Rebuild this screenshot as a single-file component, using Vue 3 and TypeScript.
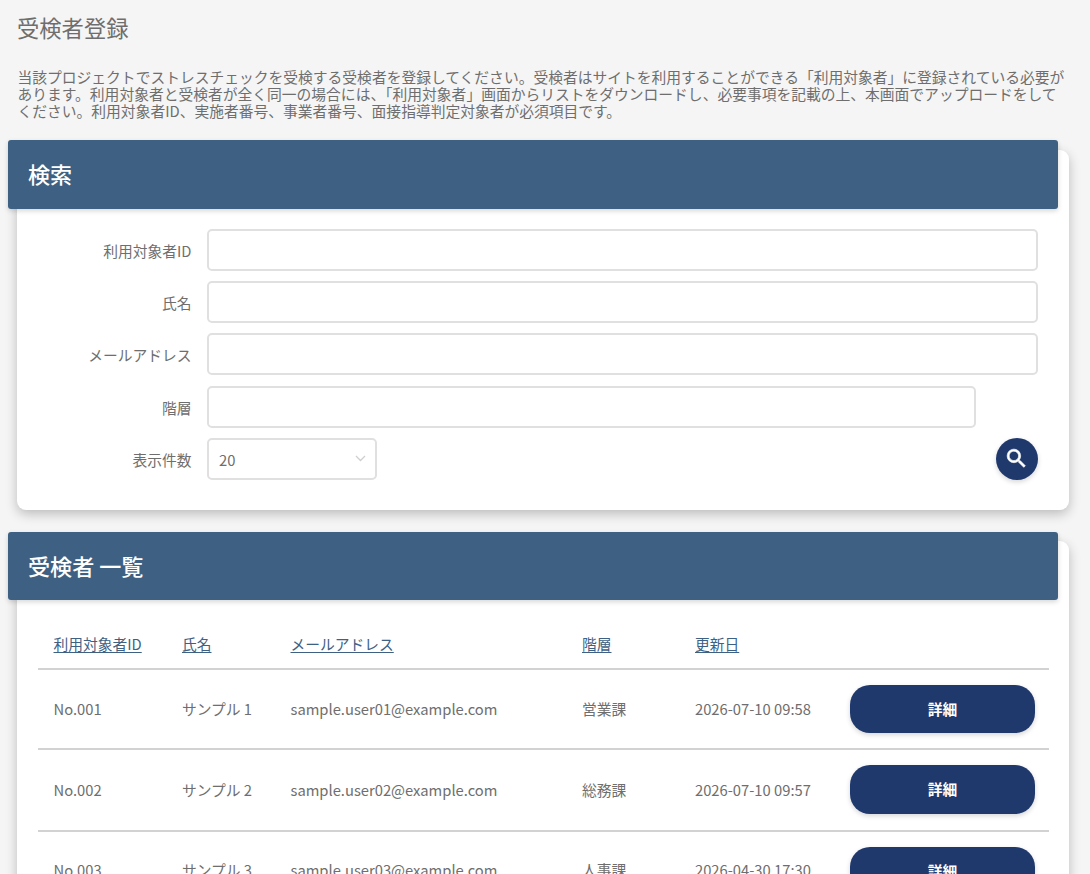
<script setup lang="ts">
interface Field {
  id: string
  label: string
  short?: boolean
}

interface Row {
  no: string
  name: string
  mail: string
  dept: string
  updated: string
}

const intro: string[] = [
  '当該プロジェクトでストレスチェックを受検する受検者を登録してください。受検者はサイトを利用することができる「利用対象者」に登録されている必要が',
  'あります。利用対象者と受検者が全く同一の場合には、「利用対象者」画面からリストをダウンロードし、必要事項を記載の上、本画面でアップロードをして',
  'ください。利用対象者ID、実施者番号、事業者番号、面接指導判定対象者が必須項目です。',
]

const fields: Field[] = [
  { id: 'user-id', label: '利用対象者ID' },
  { id: 'name', label: '氏名' },
  { id: 'mail', label: 'メールアドレス' },
  { id: 'dept', label: '階層', short: true },
]

const columns: string[] = ['利用対象者ID', '氏名', 'メールアドレス', '階層', '更新日']

const rows: Row[] = [
  { no: 'No.001', name: 'サンプル 1', mail: 'sample.user01@example.com', dept: '営業課', updated: '2026-07-10 09:58' },
  { no: 'No.002', name: 'サンプル 2', mail: 'sample.user02@example.com', dept: '総務課', updated: '2026-07-10 09:57' },
  { no: 'No.003', name: 'サンプル 3', mail: 'sample.user03@example.com', dept: '人事課', updated: '2026-04-30 17:30' },
]
</script>

<template>
  <main class="page" lang="ja">
    <h1 class="title">受検者登録</h1>
    <p class="intro">
      <span v-for="line in intro" :key="line" class="intro-line">{{ line }}</span>
    </p>

    <section class="card search-card">
      <h2 class="card-head">検索</h2>
      <form class="form" @submit.prevent>
        <div v-for="f in fields" :key="f.id" class="field">
          <label class="label" :for="f.id">{{ f.label }}</label>
          <input :id="f.id" class="input" :class="{ short: f.short }" type="text" />
        </div>
        <div class="field">
          <span class="label">表示件数</span>
          <div class="select">
            <span>20</span>
            <svg class="chevron" width="11" height="7" viewBox="0 0 11 7">
              <path d="M1 1l4.500 4.500L10 1" fill="none" stroke="#cfcfcf" stroke-width="1.300" />
            </svg>
          </div>
          <button class="search-btn" type="submit" aria-label="検索">
            <svg width="25" height="25" viewBox="0 0 24 24">
              <path
                fill="#fff"
                stroke="#fff"
                stroke-width="0.600"
                d="M15.500 14h-.79l-.28-.27A6.471 6.471 0 0 0 16 9.500 6.500 6.500 0 1 0 9.500 16c1.610 0 3.090-.59 4.230-1.570l.27.28v.79l5 4.990L20.490 19l-4.990-5zm-6 0C7.010 14 5 11.990 5 9.500S7.010 5 9.500 5 14 7.010 14 9.500 11.990 14 9.500 14z"
              />
            </svg>
          </button>
        </div>
      </form>
    </section>

    <section class="card list-card">
      <h2 class="card-head">受検者 一覧</h2>
      <div class="table">
        <div class="row head-row">
          <span v-for="c in columns" :key="c"><a class="sort">{{ c }}</a></span>
        </div>
        <div v-for="r in rows" :key="r.no" class="row data-row">
          <span>{{ r.no }}</span>
          <span>{{ r.name }}</span>
          <span>{{ r.mail }}</span>
          <span>{{ r.dept }}</span>
          <span>{{ r.updated }}</span>
          <button class="detail" type="button">詳細</button>
        </div>
      </div>
    </section>
  </main>
</template>

<style>
html,
body {
  margin: 0;
  background: #f5f5f5;
  overflow: hidden;
}
</style>

<style scoped>
.page {
  box-sizing: border-box;
  width: 1090px;
  height: 874px;
  overflow: hidden;
  background: #f5f5f5;
  color: #6e6e6e;
  font-family: 'Noto Sans CJK JP', sans-serif;
  font-size: 14.750px;
}
.title {
  margin: 0;
  padding: 11px 0 0 17px;
  font-size: 22.300px;
  font-weight: 400;
  line-height: 32px;
}
.intro {
  margin: 25px 0 0 17.500px;
  font-size: 14.770px;
  line-height: 17px;
}
.intro-line {
  display: block;
  white-space: nowrap;
}
.card {
  display: flow-root;
  box-sizing: border-box;
  width: 1051.500px;
  margin-left: 17px;
  background: #fff;
  border-radius: 9px;
  box-shadow: 0 4px 12px rgba(0, 0, 0, 0.24);
}
.search-card {
  height: 360.500px;
  margin-top: 30.500px;
}
.list-card {
  height: 400px;
  margin-top: 30.500px;
}
.card-head {
  box-sizing: border-box;
  height: 69px;
  margin: -10px 11px 0 -9px;
  padding-left: 20px;
  border-radius: 3px;
  background: #3e6183;
  color: #fff;
  font-size: 22.100px;
  font-weight: 500;
  line-height: 67px;
  box-shadow: 0 2px 5px rgba(0, 0, 0, 0.16);
}
.list-card .card-head {
  height: 68px;
  margin-top: -9px;
  line-height: 66px;
}
.form {
  display: flex;
  flex-direction: column;
  gap: 10.350px;
  padding: 20px 31px 0 0;
}
.field {
  display: flex;
  align-items: center;
  height: 42px;
}
.label {
  width: 174.500px;
  margin-right: 15.500px;
  padding-top: 1px;
  text-align: right;
}
.input,
.select {
  box-sizing: border-box;
  height: 42px;
  border: 2px solid #e0e0e0;
  border-radius: 5px;
  background: #fff;
}
.input {
  flex: 1;
  min-width: 0;
}
.input.short {
  margin-right: 61.500px;
}
.select {
  display: flex;
  align-items: center;
  justify-content: space-between;
  width: 170px;
  padding: 1px 9px 0 10px;
}
.chevron {
  margin-bottom: 2px;
}
.search-btn {
  display: flex;
  align-items: center;
  justify-content: center;
  width: 42px;
  height: 42px;
  margin-left: auto;
  padding: 0;
  border: 0;
  border-radius: 50%;
  background: #20396d;
  box-shadow: 0 2px 5px rgba(0, 0, 0, 0.16);
}
.table {
  margin: 0 20px 0 21px;
}
.row {
  display: grid;
  grid-template-columns: 128.500px 108.500px 291.500px 113px 155px 185px;
  box-sizing: border-box;
  padding-left: 15.500px;
  align-items: center;
  border-bottom: 2px solid #d2d2d2;
  white-space: nowrap;
}
.head-row {
  height: 70.500px;
  padding-top: 20px;
}
.data-row {
  height: 80px;
}
.data-row:nth-child(n + 3) {
  height: 81.500px;
}
.data-row > span {
  padding-bottom: 1px;
}
.sort {
  color: #3e6183;
  text-decoration: underline;
  text-underline-offset: 2px;
}
.detail {
  height: 48px;
  padding: 0 0 2px;
  border: 0;
  border-radius: 20px;
  background: #20396d;
  color: #fff;
  font-family: inherit;
  font-size: 14.730px;
  font-weight: 700;
  box-shadow: 0 2px 5px rgba(0, 0, 0, 0.16);
}
.data-row:nth-child(n + 3) .detail {
  height: 49px;
}
.data-row:nth-child(n + 4) > span {
  padding-bottom: 3px;
}
</style>
